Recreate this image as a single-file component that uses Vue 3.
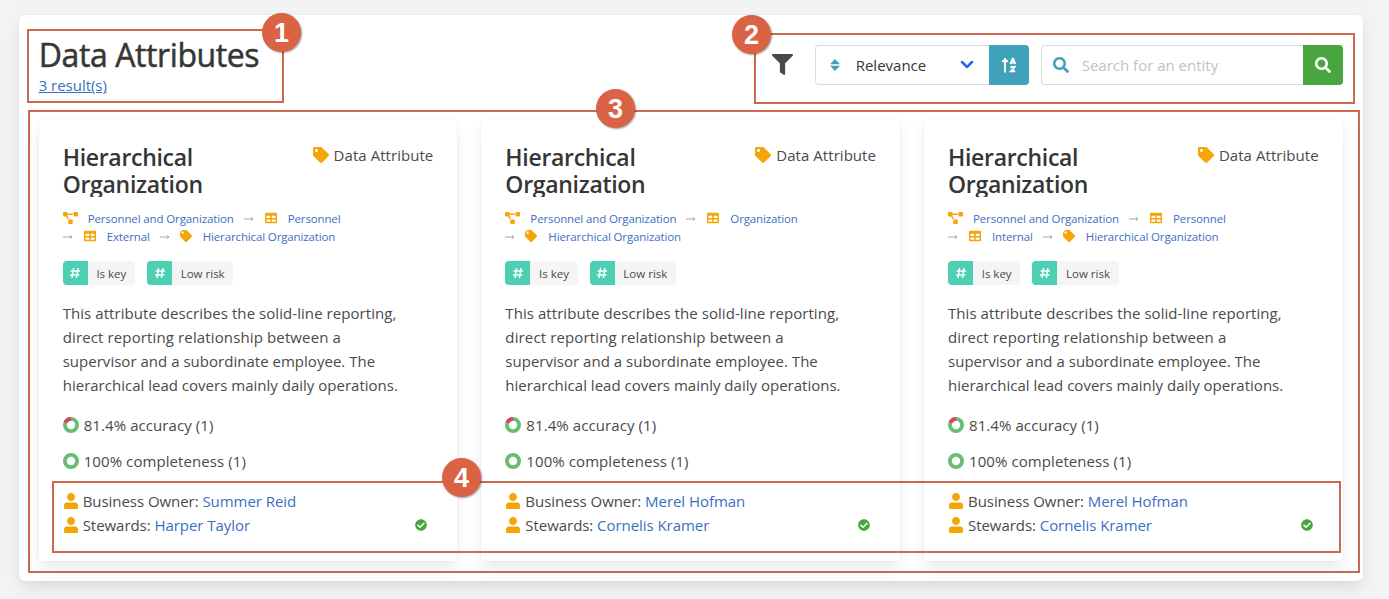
<script setup>
const icons = {
  filter: ['0 0 512 512', 'M487.976 0H24.028C2.71 0-8.047 25.866 7.058 40.971L192 225.941V432c0 7.831 3.821 15.17 10.237 19.662l80 55.98C298.02 518.69 320 507.493 320 487.98V225.941l184.947-184.97C520.021 25.896 509.338 0 487.976 0z'],
  tag: ['0 0 512 512', 'M0 252.118V48C0 21.49 21.49 0 48 0h204.118a48 48 0 0 1 33.941 14.059l211.882 211.882c18.745 18.745 18.745 49.137 0 67.882L293.823 497.941c-18.745 18.745-49.137 18.745-67.882 0L14.059 286.059A48 48 0 0 1 0 252.118zM112 64c-26.51 0-48 21.49-48 48s21.49 48 48 48 48-21.49 48-48-21.49-48-48-48z'],
  diagram: ['0 0 640 512', 'M384 320H256c-17.67 0-32 14.33-32 32v128c0 17.67 14.33 32 32 32h128c17.67 0 32-14.33 32-32V352c0-17.67-14.33-32-32-32zM192 32c0-17.67-14.33-32-32-32H32C14.33 0 0 14.33 0 32v128c0 17.67 14.33 32 32 32h95.72l73.16 128.04C211.98 300.98 232.4 288 256 288h.28L192 175.51V128h224V64H192V32zM608 0H480c-17.67 0-32 14.33-32 32v128c0 17.67 14.33 32 32 32h128c17.67 0 32-14.33 32-32V32c0-17.67-14.33-32-32-32z'],
  table: ['0 0 512 512', 'M464 32H48C21.49 32 0 53.49 0 80v352c0 26.51 21.49 48 48 48h416c26.51 0 48-21.49 48-48V80c0-26.51-21.49-48-48-48zM224 416H64v-96h160v96zm0-160H64v-96h160v96zm224 160H288v-96h160v96zm0-160H288v-96h160v96z'],
  search: ['0 0 512 512', 'M505 442.7L405.3 343c-4.5-4.5-10.6-7-17-7H372c27.6-35.3 44-79.7 44-128C416 93.1 322.9 0 208 0S0 93.1 0 208s93.1 208 208 208c48.3 0 92.7-16.4 128-44v16.3c0 6.4 2.5 12.5 7 17l99.7 99.7c9.4 9.4 24.6 9.4 33.9 0l28.3-28.3c9.4-9.4 9.4-24.6.1-34zM208 336c-70.7 0-128-57.2-128-128 0-70.7 57.2-128 128-128 70.7 0 128 57.2 128 128 0 70.7-57.2 128-128 128z'],
  user: ['0 0 448 512', 'M224 256c70.7 0 128-57.3 128-128S294.7 0 224 0 96 57.3 96 128s57.3 128 128 128zM100 300h248a100 100 0 0 1 100 100v72a40 40 0 0 1-40 40H40a40 40 0 0 1-40-40v-72a100 100 0 0 1 100-100z'],
  check: ['0 0 512 512', 'M504 256c0 136.967-111.033 248-248 248S8 392.967 8 256 119.033 8 256 8s248 111.033 248 248zM227.314 387.314l184-184c6.248-6.248 6.248-16.379 0-22.627l-22.627-22.627c-6.248-6.249-16.379-6.249-22.628 0L216 308.118l-70.059-70.059c-6.248-6.248-16.379-6.248-22.628 0l-22.627 22.627c-6.248 6.248-6.248 16.379 0 22.627l104 104c6.249 6.249 16.379 6.249 22.628.001z'],
}
const root = { icon: 'diagram', text: 'Personnel and Organization' }
const leaf = { icon: 'tag', text: 'Hierarchical Organization', arrow: true }
const table = (text) => ({ icon: 'table', text, arrow: true })
const cards = [
  { path: [[root, table('Personnel')], [table('External'), leaf]], owner: 'Summer Reid', steward: 'Harper Taylor' },
  { path: [[root, table('Organization')], [leaf]], owner: 'Merel Hofman', steward: 'Cornelis Kramer' },
  { path: [[root, table('Personnel')], [table('Internal'), leaf]], owner: 'Merel Hofman', steward: 'Cornelis Kramer' },
]
const description = [
  'This attribute describes the solid-line reporting,',
  'direct reporting relationship between a',
  'supervisor and a subordinate employee. The',
  'hierarchical lead covers mainly daily operations.',
]
</script>

<template>
  <div class="page">
    <div class="prev-box"></div>
    <main class="box">
      <header class="head">
        <div class="heading">
          <h1>Data Attributes</h1>
          <a class="results">3 result(s)</a>
        </div>
        <div class="tools">
          <svg class="filter" :viewBox="icons.filter[0]"><path :d="icons.filter[1]" /></svg>
          <div class="select">
            <svg class="sort" viewBox="0 0 10 12"><path d="M5 0L10 5.2H0zM5 12L0 6.8h10z" /></svg>
            <span>Relevance</span>
            <svg class="chev" viewBox="0 0 14 10"><path d="M2 2l5 5 5-5" /></svg>
          </div>
          <button class="order">
            <svg viewBox="0 0 16 16">
              <path class="ln" d="M4 15.5V2.5M1.3 5l2.7-2.8L6.7 5" />
              <path class="ln" d="M9.5 7.2L11.7 1.8h.4L14.3 7.2M10.4 5.6h3M9.4 10h4.2L9.9 14.3h4.3" />
            </svg>
          </button>
          <div class="search">
            <svg :viewBox="icons.search[0]"><path :d="icons.search[1]" /></svg>
            <span>Search for an entity</span>
          </div>
          <button class="go"><svg :viewBox="icons.search[0]"><path :d="icons.search[1]" /></svg></button>
        </div>
      </header>

      <section class="cards">
        <article v-for="(c, i) in cards" :key="i" class="card">
          <div class="top">
            <h2>Hierarchical<br />Organization</h2>
            <div class="kind">
              <svg :viewBox="icons.tag[0]"><path :d="icons.tag[1]" /></svg><span>Data Attribute</span>
            </div>
          </div>
          <nav class="crumbs">
            <div v-for="(row, r) in c.path" :key="r" class="crumb-row">
              <template v-for="s in row" :key="s.text">
                <svg v-if="s.arrow" class="arrow" viewBox="0 0 10 6"><path d="M0 3h9M7 1.2L9 3 7 4.8" /></svg>
                <svg :class="['ci', s.icon]" :viewBox="icons[s.icon][0]"><path :d="icons[s.icon][1]" /></svg>
                <a>{{ s.text }}</a>
              </template>
            </div>
          </nav>
          <div class="tags">
            <span v-for="t in ['Is key', 'Low risk']" :key="t" class="tag">
              <span class="hash"><svg viewBox="0 0 12 12"><path d="M4.6 1L3 11M9 1L7.4 11M1.6 4h9.4M1 8h9.4" /></svg></span>
              <span class="label">{{ t }}</span>
            </span>
          </div>
          <div class="desc"><div v-for="(l, n) in description" :key="n" :class="'d' + n">{{ l }}</div></div>
          <div class="metric">
            <svg viewBox="0 0 16 16">
              <circle class="good" cx="8" cy="8" r="6.1" />
              <circle class="bad" cx="8" cy="8" r="6.1" pathLength="100" stroke-dasharray="18.6 81.4" transform="rotate(-157 8 8)" />
            </svg>
            <span>81.4% accuracy (1)</span>
          </div>
          <div class="metric">
            <svg viewBox="0 0 16 16"><circle class="good" cx="8" cy="8" r="6.1" /></svg>
            <span>100% completeness (1)</span>
          </div>
          <div class="people">
            <div class="person">
              <svg :viewBox="icons.user[0]"><path :d="icons.user[1]" /></svg>
              <span>Business Owner: <a>{{ c.owner }}</a></span>
            </div>
            <div class="person">
              <svg :viewBox="icons.user[0]"><path :d="icons.user[1]" /></svg>
              <span>Stewards: <a>{{ c.steward }}</a></span>
              <svg class="ok" :viewBox="icons.check[0]"><path :d="icons.check[1]" /></svg>
            </div>
          </div>
        </article>
      </section>
    </main>

    <div v-for="n in 4" :key="'f' + n" :class="['frame', 'f' + n]"></div>
    <div v-for="n in 4" :key="'b' + n" :class="['badge', 'b' + n]">{{ n }}</div>
  </div>
</template>

<style>
body { background: #f3f3f3; overflow: hidden; }
</style>

<style scoped>
* { box-sizing: border-box; }
.page { position: relative; height: 599px; overflow: hidden; font-family: "Open Sans", "Noto Sans", sans-serif; font-size: 15px; color: #4a4a4a; white-space: nowrap; }
svg { display: block; fill: currentColor; flex: none; }
a { color: #3a6fc4; }
.prev-box { height: 1px; margin: -1px 26px 15px 19px; box-shadow: 0 8px 16px -2px rgba(10,10,10,.1), 0 0 0 1px rgba(10,10,10,.02); }
.box { width: 1344px; height: 566px; margin-left: 18.7px; padding: 20px; background: #fff; border-radius: 6px; box-shadow: 0 8px 16px -2px rgba(10,10,10,.1), 0 0 0 1px rgba(10,10,10,.02); }
.head { height: 84px; display: flex; justify-content: space-between; }
h1 { margin: 0; font-size: 32px; font-weight: 400; -webkit-text-stroke: .5px #363636; line-height: 40px; letter-spacing: -.4px; color: #363636; }
.results { display: block; margin-top: -2px; line-height: 24px; letter-spacing: -.03px; text-decoration: underline; }
.tools { display: flex; height: 40px; margin-top: 10px; }
.filter { width: 21px; height: 21px; margin: 9px 22px 0 0; }
.select { width: 174px; display: flex; align-items: center; padding: 0 15px 0 14px; border: 1px solid #dbdbdb; border-right: 0; border-radius: 4px 0 0 4px; color: #363636; }
.sort { width: 10px; height: 12px; margin-right: 16px; color: #3fa2ba; }
.chev { width: 14px; height: 10px; margin-left: auto; fill: none; stroke: #2a6bdb; stroke-width: 2.5; stroke-linecap: round; stroke-linejoin: round; }
button { display: flex; align-items: center; justify-content: center; width: 40px; height: 40px; padding: 0; border: 0; color: #fff; border-radius: 0 4px 4px 0; }
.order { background: #3fa2ba; margin-right: 12px; }
.order svg { width: 16px; height: 16px; }
.ln { fill: none; stroke: #fff; stroke-width: 1.9; }
.search { width: 262px; display: flex; align-items: center; padding-left: 11px; border: 1px solid #dbdbdb; border-right: 0; border-radius: 4px 0 0 4px; color: #c2c2c2; }
.search svg, .go svg { width: 16px; height: 16px; }
.search svg { color: #3fa2ba; margin-right: 13px; }
.go { background: #48a63f; }
.cards { display: grid; grid-template-columns: repeat(3, 418.67px); gap: 24px; }
.card { height: 442px; padding: 24px; background: #fff; border-radius: 4px; box-shadow: 0 8px 16px -2px rgba(10,10,10,.1), 0 0 0 1px rgba(10,10,10,.02); }
.top { display: flex; justify-content: space-between; height: 54px; }
h2 { margin: 0; height: 54px; padding-top: 1px; overflow: hidden; font-size: 23px; line-height: 27px; font-weight: 600; letter-spacing: -.3px; color: #363636; }
.kind { display: flex; gap: 5px; line-height: 24px; letter-spacing: .05px; }
.kind svg { width: 16px; height: 16px; margin-top: 4px; color: #f5a506; }
.crumbs { margin-top: 12px; font-size: 11.5px; letter-spacing: -.13px; line-height: 18px; }
.crumb-row { display: flex; align-items: center; height: 18px; }
.crumb-row a { padding-top: 1px; }
.ci { width: 12px; height: 12px; margin-right: 11px; color: #f5a506; }
.ci.diagram { width: 15px; margin-right: 10px; }
.arrow { width: 10px; height: 6px; margin: 2px 11px 0 0; fill: none; stroke: #a5a5a5; stroke-width: 1; }
a + .arrow { margin-left: 10px; }
.arrow + .tag { margin-left: -1px; }
.tags { display: flex; gap: 12px; margin-top: 16px; }
.tag { display: flex; border-radius: 4px; }
.tags .tag { height: 24px; overflow: hidden; background: #f5f5f5; font-size: 11.5px; line-height: 25px; }
.hash { width: 25px; display: flex; align-items: center; justify-content: center; background: #4bd0b3; }
.hash svg { width: 12px; height: 12px; fill: none; stroke: #fff; stroke-width: 1.5; }
.label { padding: 0 8.7px; }
.desc { margin-top: 16px; line-height: 24px; }
.d0 { letter-spacing: .06px; }
.d1 { letter-spacing: .13px; }
.d2 { letter-spacing: .02px; }
.d3 { letter-spacing: .01px; }
.metric { display: flex; align-items: center; gap: 5px; height: 24px; margin-top: 16px; letter-spacing: .08px; }
.metric + .metric { margin-top: 12px; }
.metric svg { width: 16px; height: 16px; }
.good, .bad { fill: none; stroke: #68bd72; stroke-width: 3.8; }
.bad { stroke: #e2405f; }
.people { margin-top: 16px; letter-spacing: -.05px; }
.person { display: flex; align-items: center; height: 24px; }
.person svg { width: 14px; height: 16px; margin: 0 5px 0 1px; color: #f5a506; }
.person .ok { width: 12px; height: 12px; margin: 0 6px 0 auto; color: #48a63f; }
.frame { position: absolute; border: 2px solid #cb694f; }
.f1 { left: 27px; top: 29px; width: 257px; height: 74px; }
.f2 { left: 754px; top: 33px; width: 601px; height: 71px; }
.f3 { left: 28px; top: 110px; width: 1332px; height: 463px; }
.f4 { left: 52px; top: 481px; width: 1289px; height: 72px; }
.badge { position: absolute; width: 39px; height: 39px; border-radius: 50%; background: #d96344; color: #fff; font: bold 27px/40px "Liberation Sans", sans-serif; text-align: center; box-shadow: 1px 1px 2px rgba(0,0,0,.4); }
.b1 { left: 262px; top: 13px; }
.b2 { left: 732px; top: 15px; }
.b3 { left: 596px; top: 89px; }
.b4 { left: 442px; top: 458px; }
</style>
